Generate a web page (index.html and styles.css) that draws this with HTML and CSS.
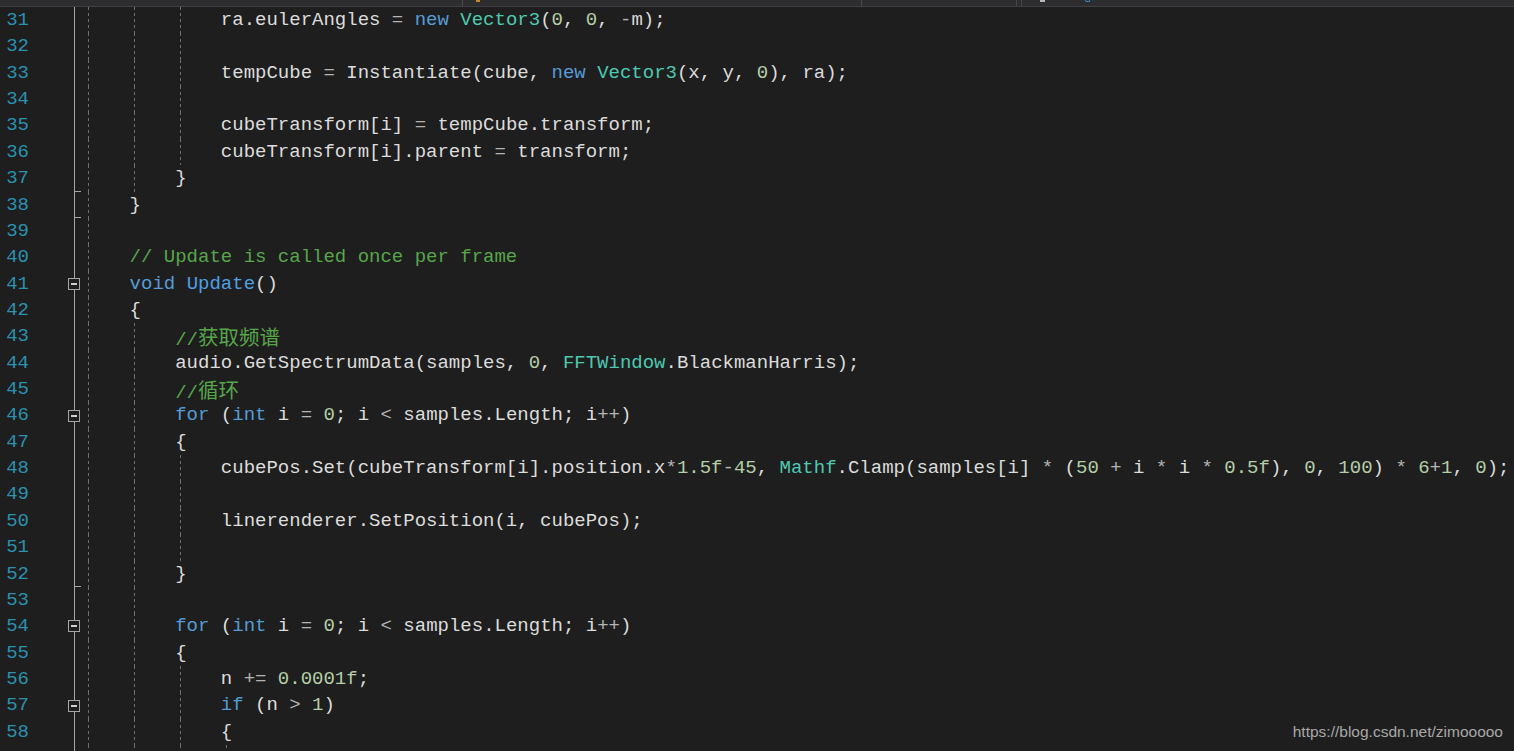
FILE: index.html
```
<!DOCTYPE html>
<html lang="zh-CN">
<head>
    <meta charset="UTF-8">
    <title>Visualizer.cs</title>
    <link rel="stylesheet" href="styles.css">
</head>
<body>
    <div class="topbar">
        <div class="seg s1"></div>
        <div class="seg s2"><span class="ico warn"></span></div>
        <div class="seg s3"></div>
        <div class="seg s4"><span class="ico pin"></span><span class="ico ring"></span></div>
    </div>

    <div class="editor">
        <div class="ln g3"><span class="num">31</span><span class="fold"></span><span class="code">            ra.eulerAngles <b class="o">=</b> <b class="k">new</b> <b class="t">Vector3</b>(<b class="n">0</b>, <b class="n">0</b>, <b class="o">-</b>m);</span></div>
        <div class="ln g3"><span class="num">32</span><span class="fold"></span><span class="code"></span></div>
        <div class="ln g3"><span class="num">33</span><span class="fold"></span><span class="code">            tempCube <b class="o">=</b> Instantiate(cube, <b class="k">new</b> <b class="t">Vector3</b>(x, y, <b class="n">0</b>), ra);</span></div>
        <div class="ln g3"><span class="num">34</span><span class="fold"></span><span class="code"></span></div>
        <div class="ln g3"><span class="num">35</span><span class="fold"></span><span class="code">            cubeTransform[i] <b class="o">=</b> tempCube.transform;</span></div>
        <div class="ln g3"><span class="num">36</span><span class="fold"></span><span class="code">            cubeTransform[i].parent <b class="o">=</b> transform;</span></div>
        <div class="ln g2 end"><span class="num">37</span><span class="fold"></span><span class="code">        }</span></div>
        <div class="ln g1 end"><span class="num">38</span><span class="fold"></span><span class="code">    }</span></div>
        <div class="ln g1"><span class="num">39</span><span class="fold"></span><span class="code"></span></div>
        <div class="ln g1"><span class="num">40</span><span class="fold"></span><span class="code">    <b class="c">// Update is called once per frame</b></span></div>
        <div class="ln g1"><span class="num">41</span><span class="fold"><i class="box"></i></span><span class="code">    <b class="k">void</b> <b class="m">Update</b>()</span></div>
        <div class="ln g1"><span class="num">42</span><span class="fold"></span><span class="code">    {</span></div>
        <div class="ln g2"><span class="num">43</span><span class="fold"></span><span class="code">        <b class="c">//<span class="cjk">获取频谱</span></b></span></div>
        <div class="ln g2"><span class="num">44</span><span class="fold"></span><span class="code">        audio.GetSpectrumData(samples, <b class="n">0</b>, <b class="t">FFTWindow</b>.BlackmanHarris);</span></div>
        <div class="ln g2"><span class="num">45</span><span class="fold"></span><span class="code">        <b class="c">//<span class="cjk">循环</span></b></span></div>
        <div class="ln g2"><span class="num">46</span><span class="fold"><i class="box"></i></span><span class="code">        <b class="k">for</b> (<b class="k">int</b> i <b class="o">=</b> <b class="n">0</b>; i <b class="o">&lt;</b> samples.Length; i<b class="o">++</b>)</span></div>
        <div class="ln g2"><span class="num">47</span><span class="fold"></span><span class="code">        {</span></div>
        <div class="ln g3"><span class="num">48</span><span class="fold"></span><span class="code">            cubePos.Set(cubeTransform[i].position.x<b class="o">*</b><b class="n">1.5f</b><b class="o">-</b><b class="n">45</b>, <b class="t">Mathf</b>.Clamp(samples[i] <b class="o">*</b> (<b class="n">50</b> <b class="o">+</b> i <b class="o">*</b> i <b class="o">*</b> <b class="n">0.5f</b>), <b class="n">0</b>, <b class="n">100</b>) <b class="o">*</b> <b class="n">6</b><b class="o">+</b><b class="n">1</b>, <b class="n">0</b>);</span></div>
        <div class="ln g3"><span class="num">49</span><span class="fold"></span><span class="code"></span></div>
        <div class="ln g3"><span class="num">50</span><span class="fold"></span><span class="code">            linerenderer.SetPosition(i, cubePos);</span></div>
        <div class="ln g3"><span class="num">51</span><span class="fold"></span><span class="code"></span></div>
        <div class="ln g2 end"><span class="num">52</span><span class="fold"></span><span class="code">        }</span></div>
        <div class="ln g2"><span class="num">53</span><span class="fold"></span><span class="code"></span></div>
        <div class="ln g2"><span class="num">54</span><span class="fold"><i class="box"></i></span><span class="code">        <b class="k">for</b> (<b class="k">int</b> i <b class="o">=</b> <b class="n">0</b>; i <b class="o">&lt;</b> samples.Length; i<b class="o">++</b>)</span></div>
        <div class="ln g2"><span class="num">55</span><span class="fold"></span><span class="code">        {</span></div>
        <div class="ln g3"><span class="num">56</span><span class="fold"></span><span class="code">            n <b class="o">+=</b> <b class="n">0.0001f</b>;</span></div>
        <div class="ln g3"><span class="num">57</span><span class="fold"><i class="box"></i></span><span class="code">            <b class="k">if</b> (n <b class="o">&gt;</b> <b class="n">1</b>)</span></div>
        <div class="ln g3"><span class="num">58</span><span class="fold"></span><span class="code">            {</span></div>
        <div class="ln g4"><span class="num"></span><span class="fold"></span><span class="code"></span></div>
    </div>

    <div class="watermark">https://blog.csdn.net/zimooooo</div>
</body>
</html>
```
FILE: styles.css
```
body {
    margin: 0;
    height: 751px;
    overflow: hidden;
    background-color: #1e1e1e;
    font-family: "Liberation Mono", "DejaVu Sans Mono", monospace;
}

/* 顶部被截掉的标签栏 */
.topbar {
    display: flex;
    height: 6px;
    background-color: #2d2d30;
    border-bottom: 1px solid #3f3f46;
}
.seg {
    position: relative;
    height: 100%;
}
.s1 { width: 462px; }
.s2 {
    width: 398px;
    border-left: 1px solid #46464c;
    border-right: 1px solid #46464c;
}
.s3 {
    width: 154px;
    border-right: 1px solid #46464c;
}
.s4 {
    flex: 1;
    margin-left: 4px;
    border-left: 1px solid #46464c;
}
.ico {
    position: absolute;
    top: 0;
    height: 2px;
}
.warn {
    left: 13px;
    width: 4px;
    background-color: #c9862a;
}
.pin {
    left: 18px;
    width: 5px;
    background-color: #b8b8b8;
}
.ring {
    left: 63px;
    width: 5px;
    border: 1px solid #3d8fd6;
    border-top: none;
    height: 2px;
    box-sizing: border-box;
    border-radius: 0 0 3px 3px;
}

/* 代码区 */
.editor {
    --dash: linear-gradient(to bottom, #707070 50%, transparent 50%);
}
.ln {
    display: flex;
    height: 26.37px;
    line-height: 26.37px;
    font-size: 19px;
}
.num {
    width: 29px;
    flex-shrink: 0;
    text-align: right;
    color: #2b91af;
}
.fold {
    width: 55px;
    flex-shrink: 0;
    display: flex;
    align-items: center;
    background: linear-gradient(#a5a5a5, #a5a5a5) no-repeat 45px 0 / 1px 100%;
}
.end .fold {
    background:
        linear-gradient(#a5a5a5, #a5a5a5) no-repeat 45px 100% / 7px 1px,
        linear-gradient(#a5a5a5, #a5a5a5) no-repeat 45px 0 / 1px 100%;
}
.box {
    width: 12px;
    height: 12px;
    margin-left: 39px;
    box-sizing: border-box;
    border: 1px solid #a5a5a5;
    background: #1e1e1e linear-gradient(#d0d0d0, #d0d0d0) no-repeat center / 6px 2px;
}
.code {
    flex: 1;
    white-space: pre;
    color: #dcdcdc;
    background-repeat: repeat-y;
    background-size: 1px 6px;
}
.g1 .code {
    background-image: var(--dash);
    background-position: 4px 0;
}
.g2 .code {
    background-image: var(--dash), var(--dash);
    background-position: 4px 0, 50px 0;
}
.g3 .code {
    background-image: var(--dash), var(--dash), var(--dash);
    background-position: 4px 0, 50px 0, 96px 0;
}
.g4 .code {
    background-image: var(--dash), var(--dash), var(--dash), var(--dash);
    background-position: 4px 0, 50px 0, 96px 0, 142px 0;
}

b {
    font-weight: normal;
}
.k { color: #569cd6; }
.m { color: #4fa0e2; }
.t { color: #4ec9b0; }
.n { color: #b5cea8; }
.c { color: #57a64a; }
.o { color: #b4b4b4; }
.cjk {
    font-family: "Noto Sans CJK SC", sans-serif;
    font-size: 20.5px;
}

.watermark {
    position: absolute;
    right: 11px;
    bottom: 10px;
    font-family: "Liberation Sans", Arial, sans-serif;
    font-size: 15.5px;
    line-height: 18px;
    color: #a8a8a8;
}
```
